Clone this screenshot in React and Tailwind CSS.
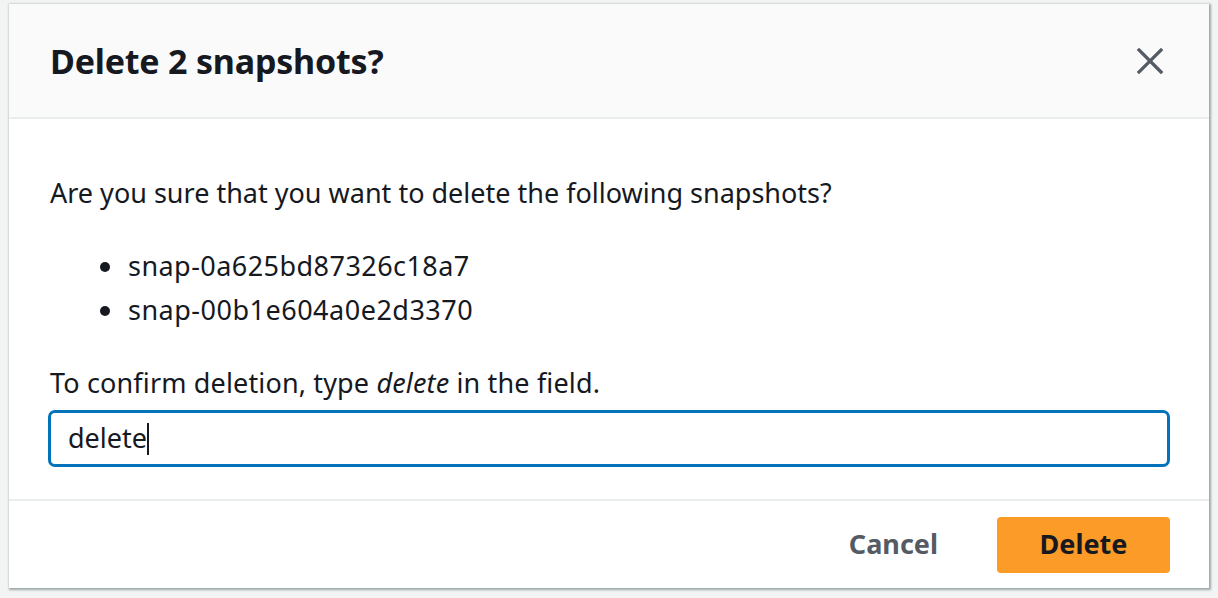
import React from "react";

export default function App() {
  return (
    <div
      className="w-[1218px] h-[598px] bg-[#f2f3f3] overflow-hidden pt-[4px] pl-[9px]"
      style={{ fontFamily: '"Noto Sans", "Open Sans", Arial, sans-serif' }}
    >
      <div className="w-[1200px] h-[584px] bg-white flex flex-col shadow-[1px_1px_2px_1px_rgba(0,28,36,0.35)]">
        <div className="h-[115px] shrink-0 bg-[#fafafa] border-b-2 border-[#eaeded] flex items-center justify-between pl-[41px] pr-[44px]">
          <h1 className="text-[34px] leading-[40px] font-bold text-[#16191f] tracking-[-0.2px]">Delete 2 snapshots?</h1>
          <button className="w-[30px] h-[30px] flex items-center justify-center text-[#545b64]">
            <svg width="28" height="28" viewBox="0 0 28 28" fill="none" stroke="currentColor" strokeWidth="3.2" strokeLinecap="square">
              <path d="M3 3L25 25M25 3L3 25" />
            </svg>
          </button>
        </div>
        <div className="flex-1 pl-[39px] pr-[39px] pt-[54px] text-[#16191f] text-[27px]">
          <p className="leading-[40px] pl-[2px]">Are you sure that you want to delete the following snapshots?</p>
          <ul className="mt-[31px] pl-[99px] list-disc leading-[44px] marker:text-[#16191f]">
            <li className="pl-[2px] -ml-[21px] tracking-[0.45px]">snap-0a625bd87326c18a7</li>
            <li className="pl-[2px] -ml-[21px] tracking-[0.5px]">snap-00b1e604a0e2d3370</li>
          </ul>
          <p className="mt-[31px] leading-[40px] pl-[2px] tracking-[0.15px]">
            To confirm deletion, type <em>delete</em> in the field.
          </p>
          <div className="mt-[7px] h-[57px] border-[3px] border-[#0073bb] rounded-[7px] flex items-center pl-[17px]">
            <span>delete</span>
            <span className="w-[2px] h-[32px] bg-[#16191f]"></span>
          </div>
        </div>
        <div className="h-[89px] shrink-0 border-t-2 border-[#eaeded] flex items-center justify-end pr-[39px]">
          <button className="text-[27px] font-bold text-[#545b64] mr-[59px]">Cancel</button>
          <button className="w-[173px] h-[56px] rounded-[4px] bg-[#fd9b28] text-[27px] font-bold text-[#16191f]">
            Delete
          </button>
        </div>
      </div>
    </div>
  );
}
